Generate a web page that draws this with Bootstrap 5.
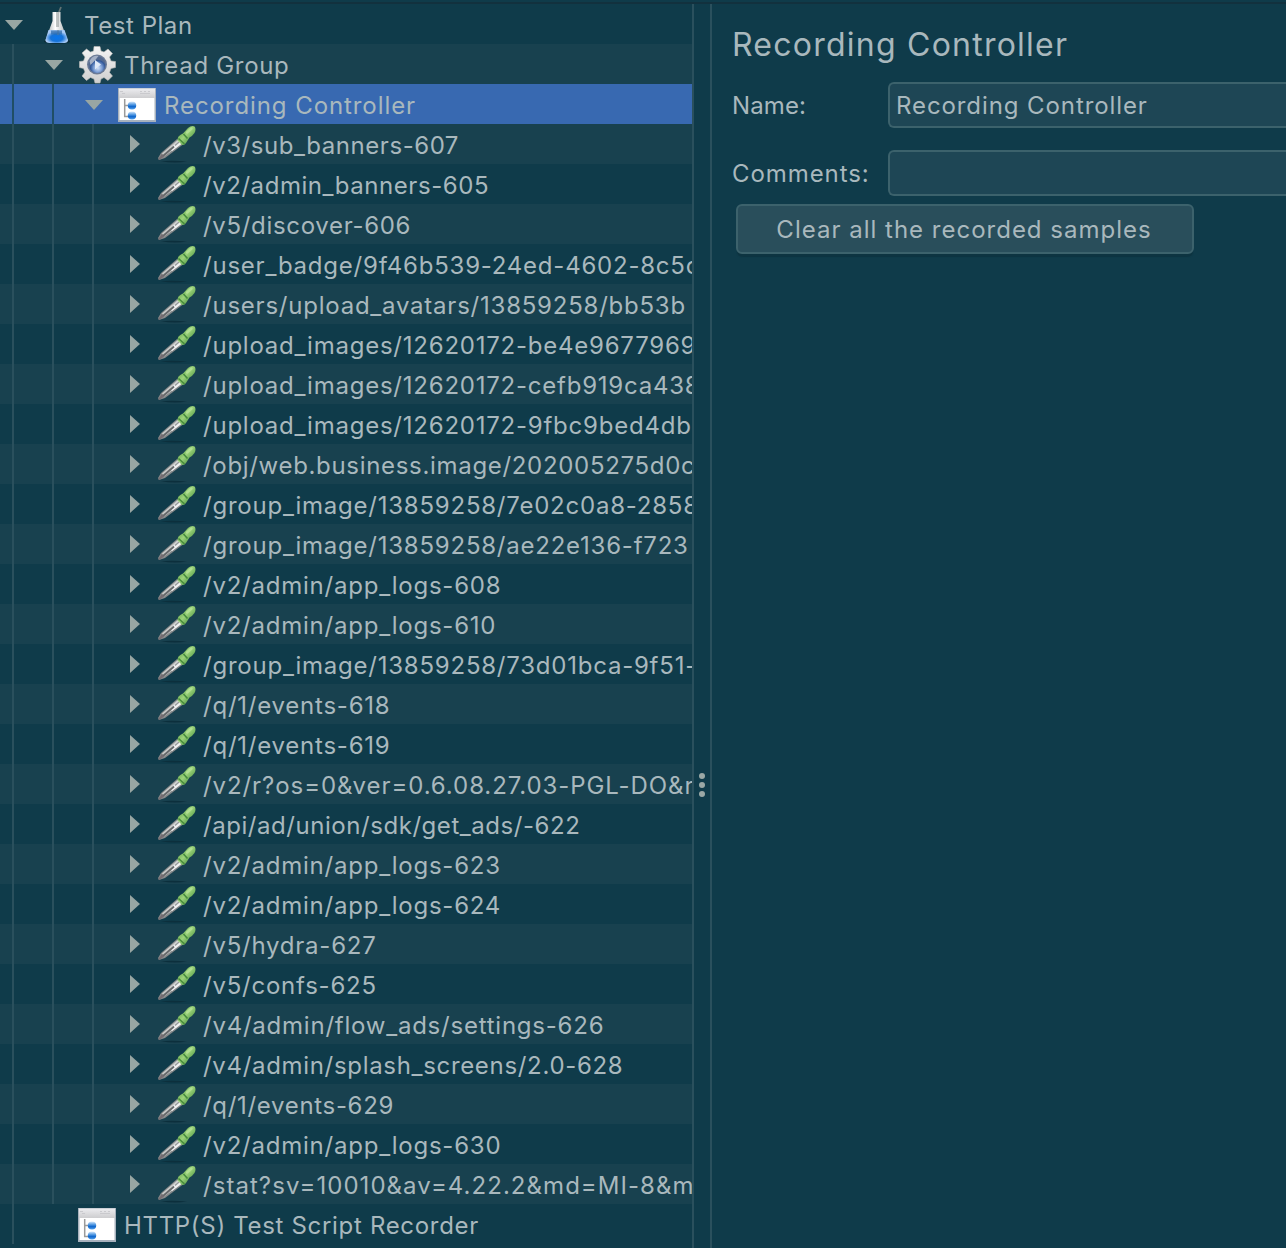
<!DOCTYPE html>
<html lang="en">
<head>
<meta charset="utf-8">
<title>Recording Controller</title>
<link href="https://cdn.jsdelivr.net/npm/bootstrap@5.3.0/dist/css/bootstrap.min.css" rel="stylesheet">
<style>
body{background:#0f3b4a;color:#a9b8bd;font-family:Inter,"Liberation Sans",sans-serif;font-size:24px;letter-spacing:.77px;overflow:hidden;height:1248px}
.topline{height:4px;border-bottom:2px solid #12313e;flex:none}
.treepane{width:694px;border-right:2px solid #2a505d;flex:none;overflow:hidden}
.splitter{width:18px;border-right:2px solid #2a505d;flex:none;padding-top:769px}
.splitter i{display:block;width:6px;height:6px;border-radius:50%;background:#9aa8a6;margin:0 0 3px 5px}
.node{height:40px;line-height:44px;white-space:nowrap;overflow:hidden;display:flex;--g:#2a505d}
.node:nth-child(even){background-color:#18414f}
.node .arrow{width:36px;height:40px;flex:none}
.node .pic{width:40px;height:40px;margin-right:8px;flex:none}
.lv1{padding-left:40px;background-image:linear-gradient(var(--g),var(--g));background-size:2px 100%;background-position:12px 0;background-repeat:no-repeat}
.lv2{padding-left:80px;background-image:linear-gradient(var(--g),var(--g)),linear-gradient(var(--g),var(--g));background-size:2px 100%;background-position:12px 0,52px 0;background-repeat:no-repeat}
.lv3{padding-left:120px;background-image:linear-gradient(var(--g),var(--g)),linear-gradient(var(--g),var(--g)),linear-gradient(var(--g),var(--g));background-size:2px 100%;background-position:12px 0,52px 0,92px 0;background-repeat:no-repeat}
.lv3 .pic{margin-right:7px}
.node.picked{background-color:#3869b1;--g:#204e65}
.snug{letter-spacing:.55px}
.close-set{letter-spacing:.68px}
.airy{letter-spacing:.92px}
.wide-set{letter-spacing:1.05px}
.editor{padding:16px 0 0 20px;min-width:0}
.editor h1{font-size:32px;line-height:50px;font-weight:400;letter-spacing:1.24px;margin:0 0 12px}
.fieldrow{height:46px;margin-bottom:22px}
.fieldrow label{width:156px;flex:none;line-height:48px}
.namelabel{letter-spacing:.1px}
.fieldrow .form-control{height:46px;padding:0 6px;font-size:24px;letter-spacing:.91px;color:#a9b8bd;background:#1e4655;border:2px solid #3c626c;border-radius:6px 0 0 6px;border-right:0}
.fieldrow+.fieldrow{margin-bottom:8px}
.clearbtn{width:458px;height:50px;margin-left:4px;padding:0 2px 0 0;line-height:48px;font-size:24px;letter-spacing:1px;color:#a9b8bd;background:#294e5b;border:2px solid #3c626c;border-radius:6px;box-shadow:0 4px 1px -1px #0d3441}
</style>
<script src="https://cdn.jsdelivr.net/npm/bootstrap@5.3.0/dist/js/bootstrap.bundle.min.js"></script>
</head>
<body class="d-flex flex-column">
<svg width="0" height="0" class="position-absolute" aria-hidden="true">
<defs>
<linearGradient id="glass"><stop offset="0" stop-color="#9aa3a5"/><stop offset=".45" stop-color="#fff"/><stop offset="1" stop-color="#a3abad"/></linearGradient>
<radialGradient id="liq" cy=".6"><stop offset="0" stop-color="#0876ee"/><stop offset=".55" stop-color="#1673d8"/><stop offset="1" stop-color="#a7c9f5"/></radialGradient>
<linearGradient id="gearfill" x2="0" y2="1"><stop offset="0" stop-color="#f4f4f4"/><stop offset="1" stop-color="#cfcfcf"/></linearGradient>
<radialGradient id="orb" cx=".55" cy=".7"><stop offset="0" stop-color="#d4e2f8"/><stop offset=".5" stop-color="#7c9ed4"/><stop offset=".85" stop-color="#315799"/><stop offset="1" stop-color="#53698f"/></radialGradient>
<linearGradient id="ball" x2="0" y2="1"><stop offset="0" stop-color="#d6e9fb"/><stop offset=".45" stop-color="#3f8cdd"/><stop offset=".65" stop-color="#0d65cc"/><stop offset="1" stop-color="#5ea7ee"/></linearGradient>
<linearGradient id="bar" x2="0" y2="1"><stop offset="0" stop-color="#ececef"/><stop offset="1" stop-color="#cdcdcf"/></linearGradient>
<linearGradient id="bulb" x1=".2" y1=".2" x2=".8" y2=".8"><stop offset="0" stop-color="#6bab55"/><stop offset=".45" stop-color="#9bd27a"/><stop offset="1" stop-color="#4f9643"/></linearGradient>
<symbol id="down" viewBox="0 0 36 40"><path d="M5 16h18l-9 10z" fill="#98a6a3"/></symbol>
<symbol id="right" viewBox="0 0 36 40"><path d="M10 11v18l10-9z" fill="#98a6a3"/></symbol>
<symbol id="flask" viewBox="0 0 40 40">
<ellipse cx="21" cy="37.500" rx="13" ry="2" fill="#0a2935"/>
<path d="M16.500 8h8v9l7 19q0 2-3 2h-16q-3 0-3-2l7-19z" fill="url(#glass)"/>
<path d="M12.500 26h16l3.500 10q0 3-4 3H13.500q-4 0-4-3z" fill="url(#liq)"/>
<path d="M20 8h3v15h-3zM21 26h2v5h-2z" fill="#7c8585" opacity=".45"/>
<path d="M15 26.500h11v4H15z" fill="#2c69a9" opacity=".7"/>
<path d="M23 8l2-5" stroke="#617273" stroke-width="1.800"/>
</symbol>
<symbol id="gear" viewBox="0 0 40 40">
<path fill="url(#gearfill)" stroke="#b9b8b6" stroke-width=".6" d="M18 2.500h6l1 4.500 3 1 4-3 4.500 4.500-3 3.500 1.500 4 4.500.500v6L35 24.500l-1.500 4 3 3.500-4.500 4.500-4-3-3 1.500-1 4h-5l-1-4-3.500-1.500-4 3-4.500-4.500 3-4-1.500-3.500-4-1v-6l4-.500 1.500-4-3-4L10.500 5l4 3 3-1z"/>
<circle cx="21" cy="20.500" r="10" fill="#6b7a95"/>
<circle cx="21" cy="20.500" r="8.600" fill="url(#orb)"/>
<path d="M13.500 17q3-6 9-5l-4 5-4 4z" fill="#a5b1c6"/>
<path d="M19 16l6 4.500-6 5z" fill="#dfe9f8"/>
</symbol>
<symbol id="window" viewBox="0 0 40 40">
<path d="M2 4h38v34H2z" fill="#a8b2bd"/><path d="M3.500 5.500h35V36h-35z" fill="#fff"/>
<path d="M3 4.500h36V14H3z" fill="url(#bar)"/>
<path d="M24 7.500h2m2 0h2m2 0h2m-10 2h10M4 7.500h3m-1 2h3" stroke="#c9c9cd"/>
<path d="M8.700 15v17.500H13M8.700 21.500H13" fill="none" stroke="#9b9b9b" stroke-width="1.500"/>
<ellipse cx="16" cy="21.500" rx="4.200" ry="4" fill="url(#ball)"/><ellipse cx="16" cy="31.500" rx="4.200" ry="4" fill="url(#ball)"/>
</symbol>
<symbol id="dropper" viewBox="0 0 40 40">
<path d="M5 37.300q12-1 26 .3-13 2-26-.3z" fill="#0c2f3c"/>
<path d="M2 34l3-5L21 15l6 5.500L9 34l-6 2z" fill="#858889"/>
<path d="M6 29.500L22 15.500l4 4L8 32.500z" fill="#c9cbca"/>
<path d="M14 24.500L23 16.500l3 3-10 7.500z" fill="#f2f2f2"/>
<path d="M7 32L18 22.500" stroke="#66696b" stroke-width="2"/>
<path d="M19 21.500l4-3.500" stroke="#969a9b" stroke-width="1.500"/>
<path d="M2 35.500l4-5.500 2 2.500-4 3z" fill="#756d72"/>
<path d="M22.500 12.500q2-2 4.500-3L32 4q3.500-3 6.500-1.500Q40.500 5 38.500 9q-2 3-5 4.500L30 19q-2 3-4.500 1.500l-4-4q0-2.500 1-4z" fill="url(#bulb)"/>
<path d="M22.500 14.500l6 5.500M27.500 10l4 4.500" stroke="#478b3d" stroke-width="1.600"/>
<path d="M31 8.500L35.500 4.500" stroke="#b1df92" stroke-width="2.400" stroke-linecap="round"/>
</symbol>
</defs>
</svg>
<div class="topline"></div>
<main class="d-flex flex-grow-1 overflow-hidden">
<div class="treepane">
<div class="node"><svg class="arrow"><use href="#down"/></svg><svg class="pic"><use href="#flask"/></svg><span class="snug">Test Plan</span></div>
<div class="node lv1"><svg class="arrow"><use href="#down"/></svg><svg class="pic"><use href="#gear"/></svg><span class="close-set">Thread Group</span></div>
<div class="node lv2 picked"><svg class="arrow"><use href="#down"/></svg><svg class="pic"><use href="#window"/></svg><span class="airy">Recording Controller</span></div>
<div class="node lv3"><svg class="arrow"><use href="#right"/></svg><svg class="pic"><use href="#dropper"/></svg><span class="snug">/v3/sub_banners-607</span></div>
<div class="node lv3"><svg class="arrow"><use href="#right"/></svg><svg class="pic"><use href="#dropper"/></svg><span class="snug">/v2/admin_banners-605</span></div>
<div class="node lv3"><svg class="arrow"><use href="#right"/></svg><svg class="pic"><use href="#dropper"/></svg><span class="close-set">/v5/discover-606</span></div>
<div class="node lv3"><svg class="arrow"><use href="#right"/></svg><svg class="pic"><use href="#dropper"/></svg><span>/user_badge/9f46b539-24ed-4602-8c5c</span></div>
<div class="node lv3"><svg class="arrow"><use href="#right"/></svg><svg class="pic"><use href="#dropper"/></svg><span>/users/upload_avatars/13859258/bb53b</span></div>
<div class="node lv3"><svg class="arrow"><use href="#right"/></svg><svg class="pic"><use href="#dropper"/></svg><span>/upload_images/12620172-be4e9677969</span></div>
<div class="node lv3"><svg class="arrow"><use href="#right"/></svg><svg class="pic"><use href="#dropper"/></svg><span>/upload_images/12620172-cefb919ca438</span></div>
<div class="node lv3"><svg class="arrow"><use href="#right"/></svg><svg class="pic"><use href="#dropper"/></svg><span>/upload_images/12620172-9fbc9bed4db</span></div>
<div class="node lv3"><svg class="arrow"><use href="#right"/></svg><svg class="pic"><use href="#dropper"/></svg><span class="close-set">/obj/web.business.image/202005275d0c</span></div>
<div class="node lv3"><svg class="arrow"><use href="#right"/></svg><svg class="pic"><use href="#dropper"/></svg><span>/group_image/13859258/7e02c0a8-2858</span></div>
<div class="node lv3"><svg class="arrow"><use href="#right"/></svg><svg class="pic"><use href="#dropper"/></svg><span>/group_image/13859258/ae22e136-f723</span></div>
<div class="node lv3"><svg class="arrow"><use href="#right"/></svg><svg class="pic"><use href="#dropper"/></svg><span>/v2/admin/app_logs-608</span></div>
<div class="node lv3"><svg class="arrow"><use href="#right"/></svg><svg class="pic"><use href="#dropper"/></svg><span>/v2/admin/app_logs-610</span></div>
<div class="node lv3"><svg class="arrow"><use href="#right"/></svg><svg class="pic"><use href="#dropper"/></svg><span>/group_image/13859258/73d01bca-9f51-</span></div>
<div class="node lv3"><svg class="arrow"><use href="#right"/></svg><svg class="pic"><use href="#dropper"/></svg><span>/q/1/events-618</span></div>
<div class="node lv3"><svg class="arrow"><use href="#right"/></svg><svg class="pic"><use href="#dropper"/></svg><span>/q/1/events-619</span></div>
<div class="node lv3"><svg class="arrow"><use href="#right"/></svg><svg class="pic"><use href="#dropper"/></svg><span class="airy">/v2/r?os=0&amp;ver=0.6.08.27.03-PGL-DO&amp;r</span></div>
<div class="node lv3"><svg class="arrow"><use href="#right"/></svg><svg class="pic"><use href="#dropper"/></svg><span class="snug">/api/ad/union/sdk/get_ads/-622</span></div>
<div class="node lv3"><svg class="arrow"><use href="#right"/></svg><svg class="pic"><use href="#dropper"/></svg><span>/v2/admin/app_logs-623</span></div>
<div class="node lv3"><svg class="arrow"><use href="#right"/></svg><svg class="pic"><use href="#dropper"/></svg><span>/v2/admin/app_logs-624</span></div>
<div class="node lv3"><svg class="arrow"><use href="#right"/></svg><svg class="pic"><use href="#dropper"/></svg><span>/v5/hydra-627</span></div>
<div class="node lv3"><svg class="arrow"><use href="#right"/></svg><svg class="pic"><use href="#dropper"/></svg><span>/v5/confs-625</span></div>
<div class="node lv3"><svg class="arrow"><use href="#right"/></svg><svg class="pic"><use href="#dropper"/></svg><span>/v4/admin/flow_ads/settings-626</span></div>
<div class="node lv3"><svg class="arrow"><use href="#right"/></svg><svg class="pic"><use href="#dropper"/></svg><span class="close-set">/v4/admin/splash_screens/2.0-628</span></div>
<div class="node lv3"><svg class="arrow"><use href="#right"/></svg><svg class="pic"><use href="#dropper"/></svg><span class="close-set">/q/1/events-629</span></div>
<div class="node lv3"><svg class="arrow"><use href="#right"/></svg><svg class="pic"><use href="#dropper"/></svg><span>/v2/admin/app_logs-630</span></div>
<div class="node lv3"><svg class="arrow"><use href="#right"/></svg><svg class="pic"><use href="#dropper"/></svg><span class="wide-set">/stat?sv=10010&amp;av=4.22.2&amp;md=MI-8&amp;m</span></div>
<div class="node lv1"><svg class="arrow"></svg><svg class="pic"><use href="#window"/></svg><span class="close-set">HTTP(S) Test Script Recorder</span></div>
</div>
<div class="splitter"><i></i><i></i><i></i></div>
<section class="editor flex-grow-1">
<h1>Recording Controller</h1>
<div class="fieldrow d-flex"><label for="nm" class="namelabel">Name:</label><input id="nm" class="form-control" value="Recording Controller"></div>
<div class="fieldrow d-flex"><label for="cm" class="airy">Comments:</label><input id="cm" class="form-control"></div>
<button type="button" class="btn clearbtn">Clear all the recorded samples</button>
</section>
</main>
</body>
</html>
